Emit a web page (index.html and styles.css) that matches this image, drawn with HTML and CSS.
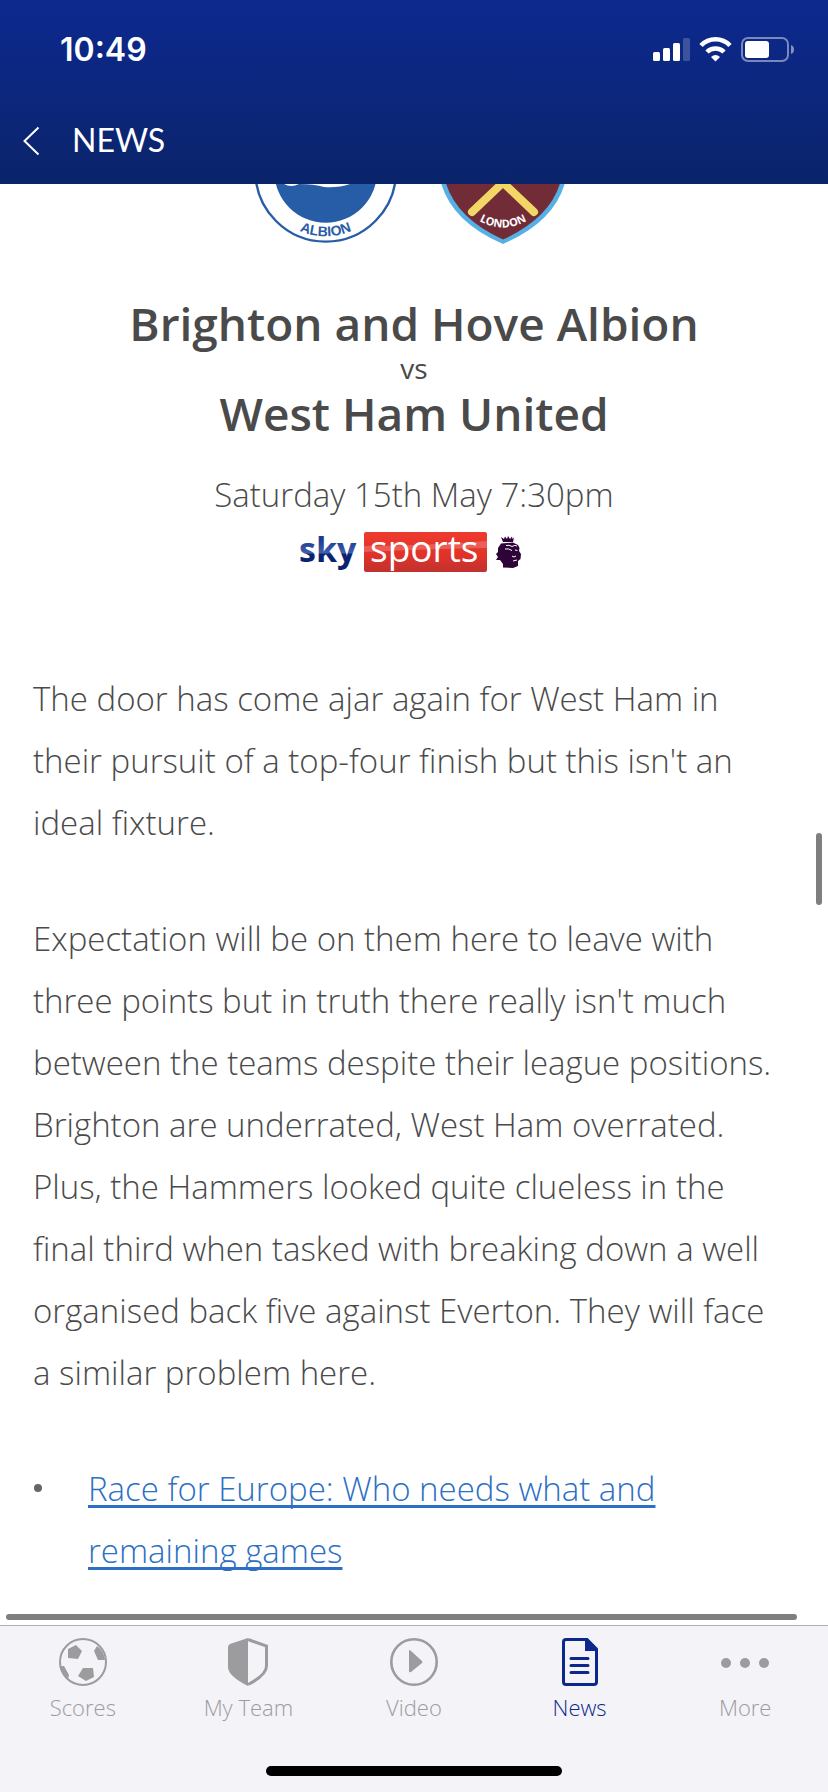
FILE: index.html
```
<!DOCTYPE html>
<html lang="en">
<head>
  <meta charset="UTF-8" />
  <meta name="viewport" content="width=device-width, initial-scale=1.0"/>
  <title>News</title>
  <link rel="stylesheet" href="styles.css">
</head>
<body>
  <header class="header">
    <div class="status-bar">
      <span class="time">10:49</span>
      <svg class="status-icons" width="144" height="26" viewBox="652 36 144 26" aria-hidden="true">
        <g fill="#fff">
          <rect x="653" y="52" width="7" height="9" rx="1.5"/>
          <rect x="663" y="48" width="7" height="13" rx="1.5"/>
          <rect x="673" y="43" width="7" height="18" rx="1.5"/>
          <rect x="683" y="38" width="7" height="23" rx="1.5" opacity="0.2"/>
        </g>
        <g fill="none" stroke="#fff" stroke-width="4.6">
          <path d="M701 45.5 A20 20 0 0 1 730 45.5"/>
          <path d="M707 52 A12 12 0 0 1 724 52"/>
        </g>
        <path d="M711 57 Q715.5 53 720 57 L715.5 61.5 Z" fill="#fff"/>
        <rect x="742" y="38" width="46" height="23" rx="6" fill="none" stroke="#fff" stroke-width="2" opacity="0.45"/>
        <rect x="745" y="41" width="24" height="17" rx="3" fill="#fff"/>
        <path d="M791 45 Q794 46 794 49.5 Q794 53 791 54 Z" fill="#fff" opacity="0.5"/>
      </svg>
    </div>
    <div class="nav-bar">
      <button class="btn-back" aria-label="Back">
        <svg width="18" height="30" viewBox="0 0 18 30"><path d="M16.5 1.5 L2.5 15 L16.5 28.5" fill="none" stroke="#fff" stroke-width="2"/></svg>
      </button>
      <h1>NEWS</h1>
    </div>
  </header>

  <main class="article">
    <svg class="crests" width="340" height="62" viewBox="244 184 340 62" role="img" aria-label="Club crests">
      <defs>
        <path id="albionArc" d="M260.7 171.3 A65 65 0 0 0 390.7 171.3"/>
        <path id="londonArc" d="M476 219 Q503 236 530 219"/>
      </defs>
      <circle cx="325.7" cy="171.3" r="70.3" fill="#fff" stroke="#275ca6" stroke-width="2.4"/>
      <circle cx="325.7" cy="171.3" r="51.4" fill="#275ca6"/>
      <path d="M284 184 Q291 188 299 184 Q314 184 324 187 Q338 188 350 184 V180 H284 Z" fill="#fff"/>
      <text class="crest-albion"><textPath href="#albionArc" startOffset="50%" text-anchor="middle">ALBION</textPath></text>
      <path d="M438 160 Q438 216 503 244 Q568 216 568 160 Z" fill="#55b0e5"/>
      <path d="M442.5 160 Q442.5 212 503 239.5 Q563.5 212 563.5 160 Z" fill="#722c38"/>
      <path d="M472 212 L512 174 M534 212 L494 174" stroke="#f2d766" stroke-width="8" stroke-linecap="round"/>
      <text class="crest-london"><textPath href="#londonArc" startOffset="50%" text-anchor="middle">LONDON</textPath></text>
    </svg>

    <section class="fixture">
      <h2>Brighton and Hove Albion</h2>
      <div class="versus">vs</div>
      <h2>West Ham United</h2>
      <p class="kickoff">Saturday 15th May 7:30pm</p>
      <svg class="channel" width="230" height="44" viewBox="298 531 230 44" role="img" aria-label="Sky Sports Premier League">
        <defs>
          <linearGradient id="skyBlue" x1="0" y1="0" x2="0" y2="1">
            <stop offset="0.3" stop-color="#1d3a90"/>
            <stop offset="0.58" stop-color="#3f5fab"/>
            <stop offset="0.62" stop-color="#0a2370"/>
          </linearGradient>
          <linearGradient id="sportsRed" x1="0" y1="0" x2="0" y2="1">
            <stop offset="0" stop-color="#ee3b2f"/>
            <stop offset="0.6" stop-color="#e03229"/>
            <stop offset="1" stop-color="#bf322e"/>
          </linearGradient>
        </defs>
        <text class="logo-sky" x="298" y="563" fill="url(#skyBlue)">sky</text>
        <rect x="363" y="533" width="123" height="40" rx="2" fill="url(#sportsRed)"/>
        <path d="M363 547 Q420 547 486 542 V549 Q420 550 363 553 Z" fill="#fff" opacity="0.2"/>
        <text class="logo-sports" x="369" y="563">sports</text>
        <path d="M500 538 L503 540 L504 537.5 L506 540 L507 537 L509 540 L511 537.5 L511.5 540 L513 538.5 L512 543 L502 543 Z" fill="#2e0338"/>
        <path d="M500 544.5 L512 543.5 L517 546 L518.5 549 L518 552 L520 555 L519.5 560 L517 562 L517 567 L512 569 L502 568.5 L502 565 L499 561 L495 561 L497 558 L495 555 L497 553 L497 549 Z" fill="#2e0338"/>
        <path d="M505 546.5 Q508 545.5 511 547.5 Q514 545.5 516 547 M504 550 Q507 549 511 551.5 M514 551 L516.5 551.5 M511 557 Q513 559 515 557 M512 562 L516 561" stroke="#fff" stroke-width="1" fill="none"/>
      </svg>
    </section>

    <section class="story">
      <p>The door has come ajar again for West Ham in<br>
        their pursuit of a top-four finish but this isn't an<br>
        ideal fixture.</p>
      <p>Expectation will be on them here to leave with<br>
        three points but in truth there really isn't much<br>
        between the teams despite their league positions.<br>
        Brighton are underrated, West Ham overrated.<br>
        Plus, the Hammers looked quite clueless in the<br>
        final third when tasked with breaking down a well<br>
        organised back five against Everton. They will face<br>
        a similar problem here.</p>
      <ul class="related">
        <li><a href="#">Race for Europe: Who needs what and<br>
          remaining games</a></li>
      </ul>
    </section>

    <div class="scroll-y"></div>
    <div class="scroll-x"></div>
  </main>

  <footer class="footer">
    <nav class="tabs">
      <a class="tab" href="#">
        <svg width="48" height="48" viewBox="0 0 48 48">
          <circle cx="24" cy="24" r="23" fill="none" stroke="currentColor" stroke-width="2"/>
          <path fill="currentColor" d="M9 11 L17 7 L23 13 L19 21 L9 20 Z M38 8 L35 13 L39 22 L46 22 Q45 13 38 8 Z M24 30 L34 30 L35 39 L27 43 L19 38 Z M2 28 L5 28 L10 37 L9 41 Q3 36 2 28 Z"/>
        </svg>
        <span>Scores</span>
      </a>
      <a class="tab" href="#">
        <svg width="48" height="48" viewBox="0 0 48 48">
          <path d="M24 1.5 L42.5 8 V28 Q42.5 37 24 46.5" fill="none" stroke="currentColor" stroke-width="3"/>
          <path d="M24 0 L6 6 Q4 7 4 9 V29 Q4 38 24 48 Z" fill="currentColor"/>
        </svg>
        <span>My Team</span>
      </a>
      <a class="tab" href="#">
        <svg width="48" height="48" viewBox="0 0 48 48">
          <circle cx="24" cy="24" r="22.7" fill="none" stroke="currentColor" stroke-width="2.6"/>
          <path d="M19 13 Q19 11 21 13 L32 23 Q33 24 32 25 L21 34 Q19 35 19 33 Z" fill="currentColor"/>
        </svg>
        <span>Video</span>
      </a>
      <a class="tab active" href="#">
        <svg width="48" height="48" viewBox="0 0 48 48">
          <path d="M9.5 1.5 H31 L40.5 11 V44 Q40.5 46.5 38 46.5 H10 Q7.5 46.5 7.5 44 V4 Q7.5 1.5 10 1.5 Z" fill="none" stroke="currentColor" stroke-width="3"/>
          <path d="M29 1 H32 L41 10 V13 H29 Z" fill="currentColor"/>
          <path d="M15 20.5 H32 M15 27.5 H32 M15 34.5 H32" stroke="currentColor" stroke-width="3" stroke-linecap="round"/>
        </svg>
        <span>News</span>
      </a>
      <a class="tab" href="#">
        <svg width="48" height="48" viewBox="0 0 48 48" fill="currentColor">
          <circle cx="5" cy="25" r="5"/><circle cx="24" cy="25" r="5"/><circle cx="43" cy="25" r="5"/>
        </svg>
        <span>More</span>
      </a>
    </nav>
    <div class="home-indicator"></div>
  </footer>
</body>
</html>
```
FILE: styles.css
```
* {
  box-sizing: border-box;
}

body {
  margin: 0;
  min-height: 100vh;
  display: flex;
  flex-direction: column;
  background: #fff;
  color: #4a4a4a;
  font-family: 'Open Sans', 'Noto Sans', sans-serif;
}

h1, h2, p, ul {
  margin: 0;
  padding: 0;
}

.header {
  height: 184px;
  background: linear-gradient(#0d298f, #0a246a);
  color: #fff;
}

.status-bar {
  display: flex;
  justify-content: space-between;
  align-items: center;
  height: 98px;
  padding: 0 32px 0 60px;
}

.time {
  font-family: Inter, sans-serif;
  font-size: 32px;
  font-weight: 600;
}

.nav-bar {
  display: flex;
  align-items: center;
  height: 86px;
  padding-left: 22px;
  gap: 32px;
}

.btn-back {
  display: flex;
  padding: 0;
  border: none;
  background: none;
  cursor: pointer;
}

h1 {
  padding-bottom: 4px;
  font-family: Lato, sans-serif;
  font-size: 32px;
  font-weight: 400;
}

.article {
  flex: 1;
  position: relative;
  overflow: hidden;
}

.crests {
  display: block;
  margin: 0 auto;
}

.crest-albion {
  font: bold 14px 'Liberation Sans', sans-serif;
  fill: #275ca6;
}

.crest-london {
  font: bold 11px 'Open Sans', sans-serif;
  fill: #fff;
}

.fixture {
  display: flex;
  flex-direction: column;
  align-items: center;
  padding-top: 48px;
}

h2 {
  font-size: 46px;
  font-weight: 600;
  line-height: 58px;
}

.versus {
  font-size: 28px;
  font-weight: 400;
  line-height: 32px;
}

.kickoff {
  margin-top: 22px;
  font-size: 33px;
  font-weight: 350;
  line-height: 62px;
}

.channel {
  display: block;
  margin-top: 4px;
  overflow: visible;
}

.logo-sky {
  font: bold 34px 'Open Sans', sans-serif;
}

.logo-sports {
  font: 400 37px 'Open Sans', sans-serif;
  fill: #fff;
}

.story {
  padding: 94px 33px 0;
  font-size: 33px;
  font-weight: 350;
  line-height: 62px;
  white-space: nowrap;
}

.story p {
  margin-bottom: 54px;
}

.related {
  list-style: none;
}

.related li {
  position: relative;
  padding-left: 55px;
}

.related li::before {
  content: "";
  position: absolute;
  left: 1px;
  top: 26px;
  width: 8px;
  height: 8px;
  border-radius: 50%;
  background: #666;
}

.related a {
  color: #2c6fc3;
  text-decoration: underline;
  text-decoration-thickness: 3px;
  text-underline-offset: 4px;
  text-decoration-skip-ink: none;
}

.scroll-y,
.scroll-x {
  position: absolute;
  border-radius: 3px;
  background: #7f7f7f;
}

.scroll-y {
  top: 649px;
  right: 6px;
  width: 6px;
  height: 72px;
}

.scroll-x {
  left: 6px;
  right: 31px;
  bottom: 5px;
  height: 6px;
}

.footer {
  display: flex;
  flex-direction: column;
  justify-content: space-between;
  height: 167px;
  padding: 12px 0 16px;
  border-top: 1px solid #b0b0b3;
  background: #f4f3f8;
}

.tabs {
  display: flex;
}

.tab {
  flex: 1;
  display: flex;
  flex-direction: column;
  align-items: center;
  gap: 6px;
  color: #9c9c9e;
  font-size: 22px;
  font-weight: 350;
  line-height: 30px;
  text-decoration: none;
}

.tab.active {
  color: #0c288c;
}

.home-indicator {
  align-self: center;
  width: 296px;
  height: 10px;
  border-radius: 5px;
  background: #000;
}
```
